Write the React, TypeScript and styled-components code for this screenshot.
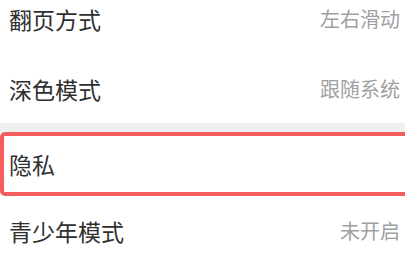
import React from 'react'
import styled, { createGlobalStyle } from 'styled-components'

const GlobalStyle = createGlobalStyle`
    html, body {
        margin: 0;
        padding: 0;
        background: #ffffff;
        overflow: hidden;
    }
    body {
        font-family: "Noto Sans CJK SC", "Noto Sans", sans-serif;
    }
`

const List = styled.div`
    width: 405px;
    margin-top: -16px;
    display: flex;
    flex-direction: column;
`

const Row = styled.div<{ $height: number; $highlight?: boolean }>`
    position: relative;
    height: ${(p) => p.$height}px;
    display: flex;
    align-items: center;
    justify-content: space-between;
    padding: 0 5px 0 9px;
    box-sizing: border-box;
    background: #ffffff;

    ${(p) =>
        p.$highlight &&
        `
        &::after {
            content: '';
            position: absolute;
            top: 0;
            bottom: 0;
            left: 0;
            right: -12px;
            border: 4px solid #f35d5d;
            border-radius: 5px;
            pointer-events: none;
        }
    `}
`

const Label = styled.span`
    font-size: 23px;
    line-height: 30px;
    color: #2f2f2f;
`

const Value = styled.span`
    font-size: 20px;
    line-height: 26px;
    color: #9f9f9f;
`

const Divider = styled.div`
    height: 9px;
    background: #eff0f0;
`

export default function App() {
    return (
        <>
            <GlobalStyle />
            <List>
                <Row $height={70}>
                    <Label>翻页方式</Label>
                    <Value>左右滑动</Value>
                </Row>
                <Row $height={69}>
                    <Label>深色模式</Label>
                    <Value>跟随系统</Value>
                </Row>
                <Divider />
                <Row $height={64} $highlight>
                    <Label>隐私</Label>
                </Row>
                <Row $height={70}>
                    <Label>青少年模式</Label>
                    <Value>未开启</Value>
                </Row>
            </List>
        </>
    )
}
